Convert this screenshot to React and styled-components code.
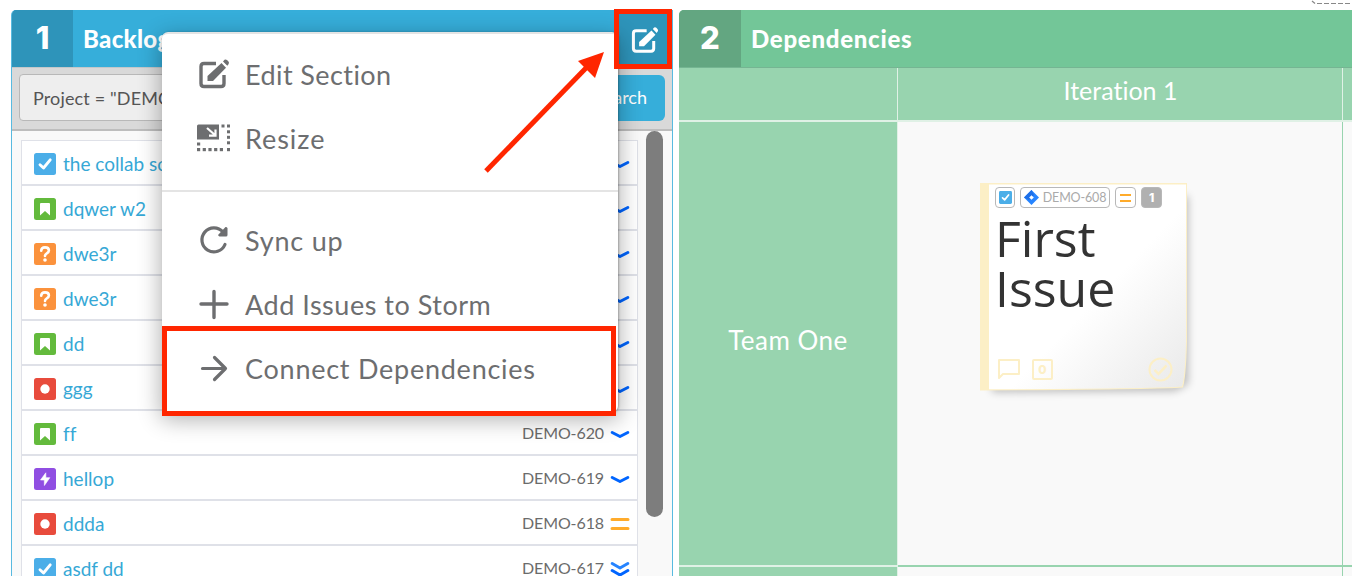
import React from "react";
import styled, { createGlobalStyle } from "styled-components";

const Global = createGlobalStyle`
  *, *::before, *::after { box-sizing: border-box; }
  html, body { margin: 0; padding: 0; background: #fff; }
  body { font-family: Lato, "Liberation Sans", sans-serif; font-variant-ligatures: none; overflow: hidden; }
  svg { display: block; flex: none; }
`;

const Board = styled.main`
  position: relative;
  display: flex;
  gap: 6px;
  width: 1352px;
  height: 576px;
  padding: 10px 0 0 11px;
  overflow: hidden;
`;

const Panel = styled.section`
  display: flex;
  flex-direction: column;
  flex: ${(p) => (p.$width ? `0 0 ${p.$width}px` : "1")};
  height: 640px;
  border-radius: 5px 0 0 0;
  overflow: hidden;
  background: #f9f9f9;
`;

const BacklogPanel = styled(Panel)`
  border: solid #58bae0;
  border-width: 0 1px 0 1px;
`;

const Header = styled.header`
  display: flex;
  align-items: center;
  height: 57px;
  flex: none;
  color: #fff;
  background: ${(p) => p.$bg};
`;

const Num = styled.div`
  width: ${(p) => p.$width}px;
  align-self: stretch;
  padding-top: 8px;
  text-align: center;
  font-family: Inter, sans-serif;
  font-size: 31px;
  line-height: 40px;
  font-weight: 800;
  background: ${(p) => p.$bg};
`;

const Title = styled.h2`
  margin: 0 0 0 10px;
  font-size: 24px;
  font-weight: 900;
  letter-spacing: ${(p) => p.$track || 0}px;
`;

const EditTab = styled.div`
  width: 56px;
  align-self: stretch;
  margin-left: auto;
  display: flex;
  align-items: center;
  justify-content: center;
  padding-top: 4px;
  background: #2e94ba;
`;

const SearchBar = styled.div`
  display: flex;
  height: 64px;
  flex: none;
  padding: 6px 7px 8px 7px;
  background: #d9d9d9;
  border-top: 1px solid #c3c8ca;
  border-bottom: 2px solid #bdbdbd;
`;

const Query = styled.div`
  flex: 1;
  display: flex;
  align-items: center;
  padding-left: 13px;
  font-size: 18px;
  letter-spacing: 0.15px;
  color: #555;
  background: #eee;
  border: 1px solid #b8b8b8;
  border-radius: 4px;
  white-space: nowrap;
`;

const SearchButton = styled.div`
  width: 94px;
  display: flex;
  align-items: center;
  justify-content: flex-end;
  padding-right: 18px;
  margin-left: 8px;
  margin-top: 1px;
  padding-bottom: 2px;
  font-size: 18px;
  color: #fff;
  background: #36aeda;
  border-radius: 6px;
`;

const ListArea = styled.div`
  display: flex;
  align-items: flex-start;
  padding-left: 9px;
`;

const List = styled.div`
  width: 617px;
  margin-top: 9px;
  background: #fff;
  border: solid #dfe1e8;
  border-width: 1px 1px 0 1px;
`;

const Row = styled.div`
  display: flex;
  align-items: center;
  height: 45px;
  padding: 2px 7px 0 12px;
  border-bottom: 2px solid #dfe1e8;
`;

const RowName = styled.span`
  flex: 1;
  margin: -1px 0 0 7px;
  font-size: 19px;
  color: #36a8d6;
`;

const RowKey = styled.span`
  margin: -2px 6px 0 0;
  font-size: 16px;
  letter-spacing: -0.1px;
  color: #6b6b6b;
`;

const Scrollbar = styled.div`
  width: 17px;
  height: 386px;
  margin-left: 8px;
  border-radius: 9px;
  background: #7d7d7d;
`;

const Menu = styled.nav`
  position: absolute;
  left: 162px;
  top: 32px;
  width: 456px;
  height: 380px;
  padding-top: 9px;
  background: #fff;
  border-top: 2px solid #e4e4e4;
  border-radius: 6px;
  box-shadow: 0 6px 22px 2px rgba(0, 0, 0, 0.3), 1px 0 2px rgba(0, 0, 0, 0.25);
`;

const MenuItem = styled.div`
  display: flex;
  align-items: center;
  height: 64px;
  padding-left: 34px;
  gap: 15px;
  font-size: 27px;
  line-height: 32px;
  color: #6d6e70;
  letter-spacing: ${(p) => p.$track || 0}px;
  white-space: nowrap;
`;

const MenuLabel = styled.span`
  margin-top: -1px;
`;

const Divider = styled.div`
  height: 2px;
  margin: 19px 0 17px;
  background: #e4e4e4;
`;

const Grid = styled.div`
  display: grid;
  grid-template-columns: 219px 445px 10px;
  grid-template-rows: 54px 445px 60px;
  border-top: 1px solid #75b592;
`;

const Cell = styled.div`
  display: flex;
  justify-content: center;
  align-items: ${(p) => (p.$head ? "flex-start" : "center")};
  padding: ${(p) => (p.$head ? "7px 0 0 1px" : "0 0 8px")};
  font-size: ${(p) => (p.$head ? 25 : 26)}px;
  letter-spacing: ${(p) => p.$track || 0}px;
  color: #fff;
  background: #98d4af;
  border: solid #e0f1e6;
  border-width: 0 1px 2px 0;
`;

const Body = styled.div`
  display: flex;
  align-items: flex-start;
  padding: 60px 0 0 82px;
  background: #f9f9f9;
  border: solid #98d4af;
  border-width: 0 1px 2px 0;
`;

const Note = styled.article`
  position: relative;
  width: 210px;
  height: 208px;
  padding: 5px 14px 0 15px;
`;

const Paper = styled.svg`
  position: absolute;
  left: -20px;
  top: -20px;
`;

const Tags = styled.div`
  position: relative;
  display: flex;
  gap: 5px;
`;

const Tag = styled.div`
  display: flex;
  align-items: center;
  justify-content: center;
  gap: 4px;
  width: ${(p) => p.$width}px;
  height: 21px;
  font-size: ${(p) => (p.$filled ? 12 : 12.5)}px;
  font-family: ${(p) => (p.$filled ? "Inter, sans-serif" : "inherit")};
  letter-spacing: -0.15px;
  font-weight: ${(p) => (p.$filled ? 800 : 400)};
  color: ${(p) => (p.$filled ? "#fff" : "#aaa")};
  background: ${(p) => (p.$filled ? "#b0b0b0" : "#fff")};
  border: 1px solid #b8b8b8;
  border-radius: 4px;
`;

const NoteText = styled.div`
  position: relative;
  margin: 5px 0 0 0;
  font-family: "Open Sans", "Noto Sans", sans-serif;
  font-size: 50px;
  line-height: 50px;
  color: #333;
`;

const NoteFooter = styled.div`
  position: relative;
  display: flex;
  align-items: center;
  height: 26px;
  margin: 43px 3px 0 3px;
  gap: 12px;
`;

const Count = styled.div`
  width: 21px;
  height: 21px;
  margin-right: auto;
  display: flex;
  align-items: center;
  justify-content: center;
  border: 2px solid #fcefc6;
  border-radius: 2px;
  color: #fcefc6;
  font-family: Inter, sans-serif;
  font-size: 12px;
  font-weight: 800;
`;

const Highlight = styled.div`
  position: absolute;
  left: ${(p) => p.$x}px;
  top: ${(p) => p.$y}px;
  width: ${(p) => p.$w}px;
  height: ${(p) => p.$h}px;
  border: 5px solid #ff2600;
`;

const Arrow = styled.svg`
  position: absolute;
  left: 480px;
  top: 48px;
`;

const Dashes = styled.svg`
  position: absolute;
  right: 0;
  top: 0;
`;

const EditIcon = ({ color, size = 34 }) => (
  <svg width={size} height={size} viewBox="0 0 34 34" fill="none">
    <path d="M20 5.500H8Q5 5.500 5 8.500V25.500Q5 28.500 8 28.500H25Q28 28.500 28 25.500V17" stroke={color} strokeWidth="3.400" />
    <path d="M11.500 23V18L25.500 5L30 9.800L17 23Z" fill={color} />
    <path d="M27 3.500L28.500 1.800Q29.700 1 31 2L32.500 3.600Q33.500 5 32.500 6.200L31.300 7.800Z" fill={color} />
    <path d="M25.600 3.600L31.200 9.100" stroke={color === "#fff" ? "#2e94ba" : "#fff"} strokeWidth="1" />
  </svg>
);

const ResizeIcon = () => (
  <svg width="34" height="34" viewBox="0 0 34 34" fill="none">
    <path d="M2.500 2.500H23V17.500H1V4Q1 2.500 2.500 2.500Z" fill="#6d6e70" />
    <path d="M11 6L19 13M19.500 7.500V13.700H13" stroke="#fff" strokeWidth="2.200" />
    <g fill="#6d6e70">
      {[25.5, 31].map((x) => <rect key={x} x={x} y="2.500" width="3" height="3" />)}
      {[8.3, 13.8, 19.3].map((y) => <rect key={y} x="31" y={y} width="3" height="3" />)}
      {[1, 6.7, 12.4, 18.1, 23.8, 31].map((x) => <rect key={x} x={x} y="26" width="3.200" height="3.200" />)}
      <rect x="1" y="20.500" width="3.200" height="3" />
    </g>
  </svg>
);

const SyncIcon = () => (
  <svg width="34" height="34" viewBox="0 0 34 34" fill="none">
    <path d="M29 20.500A12 12 0 1 1 27 8" stroke="#6d6e70" strokeWidth="3.200" strokeLinecap="round" />
    <path d="M29.500 3Q31.300 2.500 31.500 4.500V11Q31.500 12.500 30 12.500H23.500Q21.500 12 22.500 10.500Z" fill="#6d6e70" />
  </svg>
);

const PlusIcon = () => (
  <svg width="34" height="34" viewBox="0 0 34 34" fill="none" stroke="#6d6e70" strokeWidth="3.400" strokeLinecap="round">
    <path d="M18 3.500V29.500M5 16H31" />
  </svg>
);

const RightIcon = () => (
  <svg width="34" height="34" viewBox="0 0 34 34" fill="none" stroke="#6d6e70" strokeWidth="3.200" strokeLinecap="round" strokeLinejoin="round">
    <path d="M6.500 16.500H29.500M18.500 5.500L29.500 16.500L18.500 27.500" />
  </svg>
);

const TYPE_COLORS = { task: "#4baee8", story: "#63ba3c", question: "#fb923c", bug: "#e84b3c", epic: "#904ee2" };

const TypeIcon = ({ type, size = 22 }) => (
  <svg width={size} height={size} viewBox="0 0 22 22" fill="none">
    <rect width="22" height="22" rx="2.500" fill={TYPE_COLORS[type]} />
    {type === "task" && <path d="M6 11.700L9.500 15L16.200 6.800" stroke="#fff" strokeWidth="2.900" strokeLinecap="round" strokeLinejoin="round" />}
    {type === "story" && <path d="M7 5H15Q16 5 16 6V17.500L11 13L6 17.500V6Q6 5 7 5Z" fill="#fff" />}
    {type === "question" && (
      <>
        <path d="M7.200 7.800Q7.200 4.400 11 4.400Q14.900 4.400 14.900 7.500Q14.900 9.200 12.800 10.300Q11 11.300 11 13" stroke="#fff" strokeWidth="2.600" strokeLinecap="round" />
        <circle cx="11" cy="17" r="1.800" fill="#fff" />
      </>
    )}
    {type === "bug" && <circle cx="11" cy="11" r="4.700" fill="#fff" />}
    {type === "epic" && <path d="M11.800 4.800L6.500 12H10.300L10.400 17.500L15.800 9.700H11.900Z" fill="#fff" stroke="#fff" strokeWidth=".6" strokeLinejoin="round" />}
  </svg>
);

const PriorityIcon = ({ level }) => (
  <svg width="20" height="20" viewBox="0 0 20 20" fill="none" strokeWidth="3" strokeLinecap="round" strokeLinejoin="round">
    {level === "low" && <path d="M2.200 8.500L10 12.500L17.800 8.500" stroke="#0065ff" />}
    {level === "medium" && <path d="M2 5.500H18M2 14.500H18" stroke="#ffab2b" />}
    {level === "lowest" && (
      <>
        <path d="M2.200 4.500L10 9L17.800 4.500" stroke="#2684ff" />
        <path d="M2.200 11.500L10 16L17.800 11.500" stroke="#0065ff" />
      </>
    )}
  </svg>
);

const ISSUES = [
  ["task", "the collab screen", "DEMO-626", "low"],
  ["story", "dqwer w2", "DEMO-625", "low"],
  ["question", "dwe3r", "DEMO-624", "low"],
  ["question", "dwe3r", "DEMO-623", "low"],
  ["story", "dd", "DEMO-622", "low"],
  ["bug", "ggg", "DEMO-621", "low"],
  ["story", "ff", "DEMO-620", "low"],
  ["epic", "hellop", "DEMO-619", "low"],
  ["bug", "ddda", "DEMO-618", "medium"],
  ["task", "asdf dd", "DEMO-617", "lowest"],
];

export default function App() {
  return (
    <>
      <Global />
      <Board>
        <BacklogPanel $width={662}>
          <Header $bg="#36aeda">
            <Num $bg="#2e94ba" $width={61}>1</Num>
            <Title $track={0.3}>Backlog</Title>
            <EditTab><EditIcon color="#fff" size={30} /></EditTab>
          </Header>
          <SearchBar>
            <Query>Project = "DEMO"</Query>
            <SearchButton>Search</SearchButton>
          </SearchBar>
          <ListArea>
            <List>
              {ISSUES.map(([type, name, key, level]) => (
                <Row key={key}>
                  <TypeIcon type={type} />
                  <RowName>{name}</RowName>
                  <RowKey>{key}</RowKey>
                  <PriorityIcon level={level} />
                </Row>
              ))}
            </List>
            <Scrollbar />
          </ListArea>
        </BacklogPanel>

        <Panel>
          <Header $bg="#73c698">
            <Num $bg="#63a681" $width={62}>2</Num>
            <Title $track={0.72}>Dependencies</Title>
          </Header>
          <Grid>
            <Cell />
            <Cell $head>Iteration 1</Cell>
            <Cell />
            <Cell $track={0.5}>Team One</Cell>
            <Body>
              <Note>
                <Paper width="250" height="250" viewBox="0 0 250 250">
                  <defs>
                    <linearGradient id="paper" x1="0.1" y1="0.1" x2="1" y2="1">
                      <stop offset="0.500" stopColor="#fff" />
                      <stop offset="1" stopColor="#e9e9e9" />
                    </linearGradient>
                    <filter id="soft" x="-20%" y="-20%" width="140%" height="140%">
                      <feGaussianBlur stdDeviation="4.500" />
                    </filter>
                  </defs>
                  <path d="M30 34H228V222L215 229L32 230Z" fill="#000" opacity=".25" filter="url(#soft)" />
                  <path d="M20 21H227V180Q226 215 223 225.500Q200 227.500 20 228.500Z" fill="#fcefc6" />
                  <path d="M29 22.500H226V180Q225 215 222 224.500Q200 226.500 29 227.300Z" fill="url(#paper)" />
                </Paper>
                <Tags>
                  <Tag $width={20}><TypeIcon type="task" size={13} /></Tag>
                  <Tag $width={90}>
                    <svg width="15" height="15" viewBox="0 0 15 15">
                      <path d="M7.500 0L15 7.500L7.500 15L0 7.500Z" fill="#2684ff" />
                      <path d="M7.500 0L10 5L7.500 7.500L5 10L0 7.500Z" fill="#1d6fe8" />
                      <path d="M7.500 5.200L9.800 7.500L7.500 9.800L5.200 7.500Z" fill="#fff" />
                    </svg>
                    DEMO-608
                  </Tag>
                  <Tag $width={21}>
                    <svg width="11" height="8" viewBox="0 0 11 8"><path d="M0 1H11M0 7H11" stroke="#ffab2b" strokeWidth="2" /></svg>
                  </Tag>
                  <Tag $width={21} $filled>1</Tag>
                </Tags>
                <NoteText>First Issue</NoteText>
                <NoteFooter>
                  <svg width="22" height="22" viewBox="0 0 22 22" fill="none">
                    <path d="M1 20V2H21V16H5Z" stroke="#fcefc6" strokeWidth="2" strokeLinejoin="round" />
                  </svg>
                  <Count>0</Count>
                  <svg width="25" height="25" viewBox="0 0 25 25" fill="none" stroke="#fcefc6">
                    <circle cx="12.500" cy="12.500" r="11" strokeWidth="2" />
                    <path d="M6.500 12.800L10.500 16.800L18.500 8.500" strokeWidth="2.600" />
                  </svg>
                </NoteFooter>
              </Note>
            </Body>
            <Body />
            <Cell />
            <Body />
            <Body />
          </Grid>
        </Panel>

        <Dashes width="42" height="6" viewBox="0 0 42 6" fill="none">
          <path d="M2 1L5 3.500M7 3.500H42" stroke="#888" strokeWidth="1.200" strokeDasharray="5 2" />
        </Dashes>

        <Menu>
          <MenuItem $track={0.42}><EditIcon color="#6d6e70" /><MenuLabel>Edit Section</MenuLabel></MenuItem>
          <MenuItem $track={0.95}><ResizeIcon /><MenuLabel>Resize</MenuLabel></MenuItem>
          <Divider />
          <MenuItem $track={0.8}><SyncIcon /><MenuLabel>Sync up</MenuLabel></MenuItem>
          <MenuItem $track={0.52}><PlusIcon /><MenuLabel>Add Issues to Storm</MenuLabel></MenuItem>
          <MenuItem $track={0.75}><RightIcon /><MenuLabel>Connect Dependencies</MenuLabel></MenuItem>
        </Menu>

        <Highlight $x={614} $y={9} $w={58} $h={60} />
        <Highlight $x={162} $y={326} $w={454} $h={90} />
        <Arrow width="130" height="130" viewBox="0 0 130 130">
          <path d="M6 123L106 20" stroke="#ff2600" strokeWidth="5" />
          <path d="M124 4L98 13L115 30Z" fill="#ff2600" />
        </Arrow>
      </Board>
    </>
  );
}
